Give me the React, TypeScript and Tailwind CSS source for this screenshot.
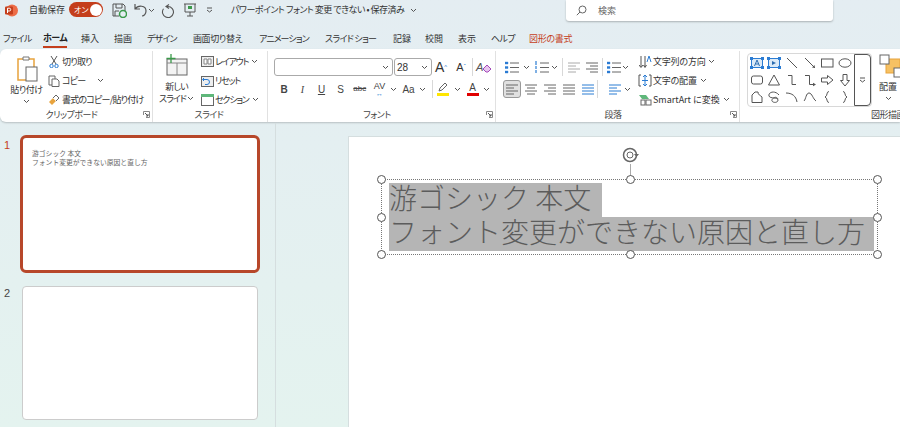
import type { ReactNode } from "react";

const tabs = [
  { label: "ファイル", cls: "w-[40px] ml-[3px] tracking-[-0.6px]" },
  { label: "ホーム", cls: "" },
  { label: "挿入", cls: "w-[33px]" },
  { label: "描画", cls: "w-[33px]" },
  { label: "デザイン", cls: "w-[46px] tracking-[-0.8px]" },
  { label: "画面切り替え", cls: "w-[66px] tracking-[-0.4px]" },
  { label: "アニメーション", cls: "w-[66px] tracking-[-0.9px]" },
  { label: "スライド ショー", cls: "w-[68px] tracking-[-0.7px]" },
  { label: "記録", cls: "w-[32px]" },
  { label: "校閲", cls: "w-[33px]" },
  { label: "表示", cls: "w-[33px]" },
  { label: "ヘルプ", cls: "w-[38px] tracking-[-0.6px]" },
  { label: "図形の書式", cls: "w-[60px] text-[#c43e1c] tracking-[-0.3px]" },
];

function Chev({ className = "" }: { className?: string }) {
  return (
    <svg width="7" height="5" viewBox="0 0 7 5" className={"shrink-0 " + className}>
      <path d="M1 1l2.500 2.500L6 1" fill="none" stroke="#555" strokeWidth="1" />
    </svg>
  );
}

function Launcher() {
  return (
    <svg width="7" height="7" viewBox="0 0 7 7" className="shrink-0">
      <path d="M.5 4V.5H6.500V6.500H3" fill="none" stroke="#888" />
      <path d="M2 2l3 3M5 3v2H3" fill="none" stroke="#555" />
    </svg>
  );
}

function Group({ w, label, children, launcher = true, sep = true }: { w: string; label: string; children: ReactNode; launcher?: boolean; sep?: boolean }) {
  return (
    <div className={"flex flex-col shrink-0 h-full " + w + (sep ? " border-r border-[#e1e1e1]" : "")}>
      <div className="flex-1 flex min-h-0 pt-px">{children}</div>
      <div className="h-[15px] flex items-center pr-[2px] shrink-0">
        <span className="flex-1 text-center text-[9px] tracking-[-0.5px] text-[#444] leading-[15px]">{label}</span>
        {launcher && <Launcher />}
      </div>
    </div>
  );
}

function Row({ icon, text, chev, track = "tracking-[-0.8px]" }: { icon: ReactNode; text: string; chev?: boolean; track?: string }) {
  return (
    <div className="h-[19px] shrink-0 flex items-center gap-[1px] text-[9px] text-[#333] whitespace-nowrap">
      <span className="w-[14px] h-[14px] flex items-center justify-center shrink-0">{icon}</span>
      <span className={track}>{text}</span>
      {chev && <Chev className="ml-[2px]" />}
    </div>
  );
}

function Sep() {
  return <span className="w-px h-[18px] bg-[#d8d8d8] shrink-0" />;
}

function Lines({ kind = "left", color = "#666" }: { kind?: "left" | "center" | "right" | "full"; color?: string }) {
  const d = {
    left: "M1 2h12M1 5h8M1 8h12M1 11h8",
    center: "M1 2h12M3 5h8M1 8h12M3 11h8",
    right: "M1 2h12M5 5h8M1 8h12M5 11h8",
    full: "M1 2h12M1 5h12M1 8h12M1 11h12",
  }[kind];
  return (
    <svg width="14" height="13" viewBox="0 0 14 13" className="shrink-0">
      <path d={d} stroke={color} strokeWidth="1" fill="none" />
    </svg>
  );
}

function ListIcon({ numbered = false }: { numbered?: boolean }) {
  return (
    <svg width="14" height="13" viewBox="0 0 14 13" className="shrink-0">
      <path d="M5 2h9M5 6.500h9M5 11h9" stroke="#666" />
      <path d={numbered ? "M1 0v4M1 5v3M1 9v3" : "M0 1h3v2H0zM0 5.500h3v2H0zM0 10h3v2H0z"} stroke="#2b7cd3" fill="#2b7cd3" strokeWidth={numbered ? 1.2 : 0.4} />
    </svg>
  );
}

function Shapes() {
  const s = { fill: "none", stroke: "#555", strokeWidth: 1 };
  const box = (c: ReactNode) => (
    <svg width="14" height="14" viewBox="0 0 14 14">{c}</svg>
  );
  const txt = (mark: ReactNode) =>
    box(
      <>
        <rect x="1.500" y="2.500" width="11" height="9" fill="#dbeaf7" stroke="#2b7cd3" />
        {mark}
        <path d="M0 1h3v3H0zM11 1h3v3h-3zM0 10h3v3H0zM11 10h3v3h-3z" fill="#2b7cd3" />
      </>
    );
  return [
    txt(<path d="M4.500 10L7 4l2.500 6M5.500 8h3" fill="none" stroke="#2b6cb0" />),
    txt(<path d="M5 5l4 2-4 2z" fill="#2b6cb0" />),
    box(<path d="M2 2l10 10" {...s} />),
    box(<><path d="M2 2l10 10" {...s} /><path d="M12 12l-3-.5 2.500-2.500z" fill="#555" /></>),
    box(<rect x="1.500" y="3" width="11.500" height="8" {...s} />),
    box(<ellipse cx="7" cy="7" rx="6" ry="4.200" {...s} />),
    box(<rect x="1.500" y="3" width="11" height="8" rx="2" {...s} />),
    box(<path d="M7 2l5.500 10h-11z" {...s} />),
    box(<path d="M3 2.500h4v9h4" {...s} />),
    box(<><path d="M2 2.500h4.500v9H11" {...s} /><path d="M13 11.500l-3-1.800v3.600z" fill="#555" /></>),
    box(<path d="M1.500 5h6V2.500L13 7l-5.500 4.500V9h-6z" {...s} />),
    box(<path d="M5 1.500h4v6h2.500L7 13 2.500 7.500H5z" {...s} />),
    box(<path d="M2 12.500V5l3-3h3c0 3 2 3 4 5v5.500z" {...s} />),
    box(<path d="M12 5C8 0 1 2 2 6c1 3 9 1 9 4s-5 3-6 1 4-6 6-2" {...s} />),
    box(<path d="M1 3c6 0 10 3 11 9" {...s} />),
    box(<path d="M1 11c2-2 2-8 5-8s4 6 7 8" {...s} />),
    box(<path d="M9 1.500C6 1.500 8 6 5 7c3 1 1 5.500 4 5.500" {...s} />),
    box(<path d="M5 1.500C8 1.500 6 6 9 7c-3 1-1 5.500-4 5.500" {...s} />),
  ];
}

function Handle({ className }: { className: string }) {
  return <span className={"absolute w-[9px] h-[9px] rounded-full bg-white border border-[#555] " + className} />;
}

export default function App() {
  return (
    <div className="w-[900px] h-[427px] overflow-hidden flex flex-col bg-linear-to-b from-[#e4edf2] to-[#e4f3ef] font-['Noto_Sans_CJK_JP',sans-serif] [font-feature-settings:'palt'] text-[#333]">
      {/* タイトルバー */}
      <div className="h-[22px] mb-[7px] flex items-start shrink-0 text-[9px] whitespace-nowrap">
        <div className="w-[29px] h-[20px] flex items-center pl-[5px] shrink-0">
          <svg width="13" height="13" viewBox="0 0 13 13">
            <circle cx="7" cy="6.500" r="6" fill="#ed6c47" />
            <rect x="0" y="2.500" width="8" height="8" rx="1" fill="#c43e1c" />
            <path d="M2.500 9V4.200h1.800a1.300 1.300 0 010 2.800H2.500" fill="none" stroke="#fff" />
          </svg>
        </div>
        <span className="w-[40px] h-[20px] flex items-center shrink-0">自動保存</span>
        <div className="w-[34px] h-[15px] mt-[2px] rounded-full bg-[#c43e1c] flex items-center justify-between pl-[5px] pr-[1px] text-white text-[8px] shrink-0">
          <span className="leading-none">オン</span>
          <span className="w-[12px] h-[12px] rounded-full bg-white" />
        </div>
        <div className="h-[20px] flex items-center shrink-0 ml-[9px]">
          <svg width="15" height="15" viewBox="0 0 15 15">
            <path d="M1 1h10l2 2v5M7 13H1V1M4 1v4h6V1M3 13V8h4" fill="none" stroke="#555" />
            <circle cx="11" cy="11" r="3.500" fill="none" stroke="#3a9a4a" strokeWidth="1.500" />
          </svg>
        </div>
        <div className="h-[20px] flex items-center shrink-0 ml-[6px]">
          <svg width="15" height="14" viewBox="0 0 15 14">
            <path d="M2 1v5h5M2 6c3-4 11-4 11 2 0 3-2 5-4 5" fill="none" stroke="#555" strokeWidth="1.200" />
          </svg>
          <Chev />
        </div>
        <div className="h-[20px] flex items-center shrink-0 ml-[6px]">
          <svg width="14" height="15" viewBox="0 0 14 15">
            <path d="M8 1.500L5 3.500l3 2M5 3.500h2a5.500 5.500 0 11-4.500 2.300" fill="none" stroke="#555" strokeWidth="1.100" />
          </svg>
        </div>
        <div className="h-[20px] flex items-center shrink-0 ml-[8px]">
          <svg width="14" height="14" viewBox="0 0 14 14">
            <path d="M1 1h12M2 1v8h10V1M7 9v4M4 13h6" fill="none" stroke="#555" />
            <rect x="5" y="3" width="4" height="3" fill="#3a9a4a" />
          </svg>
        </div>
        <div className="h-[20px] flex items-center shrink-0 ml-[9px]">
          <svg width="7" height="6" viewBox="0 0 7 6">
            <path d="M1 1h5M1 3l2.500 2L6 3" fill="none" stroke="#555" />
          </svg>
        </div>
        <span className="h-[20px] flex items-center shrink-0 w-[179px] ml-[18px] tracking-[-0.5px]">パワーポイント フォント 変更 できない • 保存済み</span>
        <div className="h-[20px] flex items-center shrink-0 w-[156px]">
          <Chev />
        </div>
        <div className="w-[267px] h-[21px] bg-white rounded-b-[3px] shadow-[0_1px_2px_rgba(0,0,0,0.25)] flex items-center pl-[10px] gap-[11px] shrink-0 text-[#666]">
          <svg width="11" height="11" viewBox="0 0 11 11">
            <circle cx="6.500" cy="4.500" r="3.500" fill="none" stroke="#666" />
            <path d="M4 7L.8 10.200" stroke="#666" />
          </svg>
          <span>検索</span>
        </div>
      </div>

      {/* タブ */}
      <div className="h-[20px] flex items-center shrink-0 text-[9px] whitespace-nowrap">
        {tabs.map((t) =>
          t.label === "ホーム" ? (
            <div key={t.label} className="w-[38px] h-[20px] flex justify-start">
              <span className="h-[19px] flex items-center font-bold text-[#222] border-b-2 border-[#c43e1c] tracking-[-0.5px]">{t.label}</span>
            </div>
          ) : (
            <span key={t.label} className={t.cls}>{t.label}</span>
          )
        )}
      </div>

      {/* リボン */}
      <div className="h-[73px] bg-white rounded-tl-[6px] rounded-bl-[6px] shadow-[0_1px_2px_rgba(0,0,0,0.2)] flex shrink-0 pt-[2px] text-[9px]">
        <Group w="w-[153px]" label="クリップボード">
          <div className="w-[47px] flex flex-col items-center pl-[6px]">
            <svg width="24" height="30" viewBox="0 0 24 30" className="mt-[2px] shrink-0">
              <path d="M3 5h16v21H3z" fill="#fff" stroke="#e8a33d" strokeWidth="1.500" />
              <path d="M8 3h6v3H8z" fill="#fff" stroke="#777" />
              <rect x="11" y="13" width="11" height="14" fill="#fff" stroke="#666" />
            </svg>
            <span className="leading-[12px] whitespace-nowrap tracking-[-0.5px]">貼り付け</span>
            <Chev className="mt-[3px]" />
          </div>
          <div className="flex flex-col">
            <Row
              text="切り取り"
              icon={
                <svg width="10" height="12" viewBox="0 0 10 12">
                  <path d="M2 0l5 8M8 0L3 8" stroke="#555" fill="none" />
                  <circle cx="2.500" cy="10" r="1.700" fill="none" stroke="#2b7cd3" />
                  <circle cx="7.500" cy="10" r="1.700" fill="none" stroke="#2b7cd3" />
                </svg>
              }
            />
            <div className="flex items-center shrink-0">
              <Row
                text="コピー"
                icon={
                  <svg width="12" height="12" viewBox="0 0 12 12">
                    <path d="M1 1h6v9H1z" fill="none" stroke="#666" />
                    <path d="M4 4h5l2 2v5.500H4z" fill="#fff" stroke="#666" />
                  </svg>
                }
              />
              <Chev className="ml-[12px]" />
            </div>
            <Row
              text="書式のコピー/貼り付け"
              icon={
                <svg width="12" height="12" viewBox="0 0 12 12">
                  <path d="M1 8l4-4 3 3-4 4z" fill="#e8a33d" />
                  <path d="M5 4l3-3 3 3-3 3" fill="#fff" stroke="#666" />
                </svg>
              }
            />
          </div>
        </Group>

        <Group w="w-[115px]" label="スライド" launcher={false}>
          <div className="w-[47px] flex flex-col items-center">
            <svg width="23" height="22" viewBox="0 0 23 22" className="mt-[2px] shrink-0">
              <rect x="2" y="5" width="20" height="16" fill="#f3f3f3" stroke="#666" />
              <path d="M2 9h20M12 9v12" stroke="#888" />
              <path d="M6 0v9M1.500 4.500h9" stroke="#3a9a4a" strokeWidth="1.300" />
            </svg>
            <span className="mt-[5px] leading-[11px] text-center whitespace-nowrap tracking-[-0.8px]">新しい</span>
            <span className="leading-[11px] flex items-center gap-[1px] mt-[1px] whitespace-nowrap tracking-[-1px]">スライド<Chev /></span>
          </div>
          <div className="flex flex-col">
            <Row
              text="レイアウト"
              chev
              track="tracking-[-1.2px]"
              icon={
                <svg width="13" height="11" viewBox="0 0 13 11">
                  <rect x=".5" y=".5" width="12" height="10" fill="#eee" stroke="#666" />
                  <path d="M3 3h3v5H3zM7 3h3v5H7z" fill="#fff" stroke="#888" />
                </svg>
              }
            />
            <Row
              text="リセット"
              track="tracking-[-1.2px]"
              icon={
                <svg width="13" height="12" viewBox="0 0 13 12">
                  <rect x=".5" y="1.500" width="12" height="10" fill="#eee" stroke="#666" />
                  <path d="M3 3l-1.500 1.500L3 6M2 4.500h4a2.500 2.500 0 010 5H4" fill="none" stroke="#2b7cd3" />
                </svg>
              }
            />
            <Row
              text="セクション"
              chev
              track="tracking-[-1.2px]"
              icon={
                <svg width="13" height="12" viewBox="0 0 13 12">
                  <rect x=".5" y=".5" width="12" height="11" fill="#fff" stroke="#666" />
                  <rect x="0" y="0" width="13" height="3" fill="#5fb77a" />
                </svg>
              }
            />
          </div>
        </Group>

        <Group w="w-[228px]" label="フォント">
          <div className="flex flex-col pl-[6px] pt-[6px] w-full">
            <div className="h-[18px] flex items-center shrink-0">
              <div className="w-[119px] h-[18px] rounded-[3px] border border-[#aaa] flex items-center justify-end pr-[3px]">
                <Chev />
              </div>
              <div className="w-[38px] h-[18px] ml-[1px] rounded-[3px] border border-[#aaa] flex items-center justify-between pl-[2px] pr-[3px] font-['Liberation_Sans',sans-serif] text-[10px]">
                28
                <Chev />
              </div>
              <span className="w-[18px] text-center text-[14px] font-['Liberation_Sans',sans-serif] leading-none">A<sup className="text-[6px] text-[#2b7cd3]">^</sup></span>
              <span className="w-[22px] text-center text-[11px] font-['Liberation_Sans',sans-serif] leading-none">A<sup className="text-[6px] text-[#2b7cd3]">ˇ</sup></span>
              <Sep />
              <span className="ml-[3px] text-[11px] font-['Liberation_Sans',sans-serif] text-[#555] italic leading-none">A</span>
              <svg width="8" height="8" viewBox="0 0 8 8" className="mt-[4px] shrink-0">
                <path d="M0 4l4-4 4 4-3 3H3z" fill="#e8c6ef" stroke="#a349b8" />
              </svg>
            </div>
            <div className="h-[20px] mt-[3px] flex items-center shrink-0 font-['Liberation_Sans',sans-serif] text-[#444] text-[10px]">
              <span className="w-[18px] text-center font-bold ml-[1px]">B</span>
              <span className="w-[19px] text-center italic font-['Liberation_Serif',serif]">I</span>
              <span className="w-[19px] text-center underline">U</span>
              <span className="w-[19px] text-center">S</span>
              <span className="w-[19.500px] text-center text-[8px] line-through">abc</span>
              <span className="w-[20px] text-center text-[9px] flex flex-col items-center leading-[9px]">
                AV
                <span className="text-[7px] leading-[5px] text-[#2b7cd3]">↔</span>
              </span>
              <Chev />
              <span className="w-[16px] text-center text-[10px] ml-[4px]">Aa</span>
              <Chev className="ml-[2px]" />
              <span className="w-px h-[18px] bg-[#d8d8d8] ml-[6px] mr-[4px]" />
              <div className="w-[12px] h-[15px] flex flex-col items-center shrink-0">
                <svg width="12" height="10" viewBox="0 0 12 10">
                  <path d="M2 9l1-3 5-5 2 2-5 5z" fill="none" stroke="#666" />
                </svg>
                <span className="w-[12px] h-[3px] mt-[1px] bg-[#ffe600]" />
              </div>
              <Chev className="ml-[5px]" />
              <div className="w-[14px] h-[15px] flex flex-col items-center ml-[5px] mr-[3px] shrink-0">
                <span className="text-[10px] leading-[11px]">A</span>
                <span className="w-[12px] h-[3px] bg-[#e00000]" />
              </div>
              <Chev />
            </div>
          </div>
        </Group>

        <Group w="w-[244px]" label="段落">
          <div className="flex flex-col pl-[7px] pt-[6px] w-[140px] shrink-0">
            <div className="h-[18px] flex items-center shrink-0 pl-[2px]">
              <ListIcon />
              <Chev className="ml-[4px]" />
              <span className="w-[5px]" />
              <ListIcon numbered />
              <Chev className="ml-[2px]" />
              <span className="w-[4px]" />
              <Sep />
              <span className="w-[4px]" />
              <Lines color="#aaa" />
              <span className="w-[4px]" />
              <Lines kind="right" />
              <span className="w-[3px]" />
              <Sep />
              <span className="w-[4px]" />
              <ListIcon />
              <Chev className="ml-[1px]" />
            </div>
            <div className="h-[20px] mt-[3px] flex items-center shrink-0">
              <span className="w-[18px] h-[18px] rounded-[3px] bg-[#e0e0e0] border border-[#999] flex items-center justify-center shrink-0">
                <Lines />
              </span>
              <span className="w-[19px] flex justify-center"><Lines kind="center" /></span>
              <span className="w-[19px] flex justify-center"><Lines kind="right" /></span>
              <span className="w-[19px] flex justify-center"><Lines kind="full" /></span>
              <span className="w-[19px] flex justify-center"><Lines kind="full" color="#2b7cd3" /></span>
              <Sep />
              <span className="w-[10px]" />
              <Lines color="#2b7cd3" />
              <Chev className="ml-[2px]" />
            </div>
          </div>
          <div className="flex flex-col pl-[2px]">
            <Row
              text="文字列の方向"
              chev
              track="tracking-[-0.2px]"
              icon={
                <svg width="13" height="14" viewBox="0 0 13 14">
                  <path d="M2 1v11M0 10l2 2.500L4 10M6 1v11M4.500 10L6 12.500 7.500 10" fill="none" stroke="#555" />
                  <path d="M8 7l2-6 2 6" fill="none" stroke="#2b7cd3" />
                </svg>
              }
            />
            <Row
              text="文字の配置"
              chev
              track="tracking-[-0.2px]"
              icon={
                <svg width="14" height="13" viewBox="0 0 14 13">
                  <path d="M3 1H1v11h2M11 1h2v11h-2" fill="none" stroke="#555" />
                  <path d="M7 1v11M5 3l2-2 2 2M5 10l2 2 2-2M4 6.500h6" fill="none" stroke="#2b7cd3" />
                </svg>
              }
            />
            <Row
              text="SmartArt に変換"
              chev
              track="tracking-[0px]"
              icon={
                <svg width="14" height="12" viewBox="0 0 14 12">
                  <path d="M1 1h7l3 4H4z" fill="#5fb77a" />
                  <rect x="8" y="6" width="5" height="5" fill="#fff" stroke="#666" />
                  <rect x="3" y="6" width="4" height="5" fill="#fff" stroke="#666" />
                </svg>
              }
            />
          </div>
        </Group>

        <Group w="w-[298px]" label="図形描画" launcher={false} sep={false}>
          <div className="flex pl-[7px] pt-[1px] items-start">
            <div className="w-[125px] h-[54px] rounded-[4px] border border-[#d8d8d8] flex shrink-0">
              <div className="w-[106px] grid grid-cols-6 grid-rows-3 place-items-center">
                {Shapes().map((icon, i) => (
                  <span key={i} className="w-[17px] h-[18px] flex items-center justify-center">{icon}</span>
                ))}
              </div>
              <div className="flex-1 border border-[#555] rounded-r-[4px] flex items-center justify-center">
                <svg width="7" height="6" viewBox="0 0 7 6">
                  <path d="M1 1h5M1 3l2.500 2L6 3" fill="none" stroke="#555" />
                </svg>
              </div>
            </div>
            <div className="w-[30px] flex flex-col items-start pl-[7px] shrink-0">
              <svg width="24" height="24" viewBox="0 0 24 24" className="mt-[1px] shrink-0">
                <rect x="7" y="5" width="14" height="14" fill="#f6c163" stroke="#e8a33d" />
                <rect x="1" y="1" width="9" height="9" fill="#fff" stroke="#666" />
                <rect x="15" y="14" width="9" height="9" fill="#fff" stroke="#666" />
              </svg>
              <span className="mt-[3px] leading-[12px] whitespace-nowrap">配置</span>
              <Chev className="mt-[3px] ml-[6px]" />
            </div>
          </div>
        </Group>
      </div>

      {/* メイン */}
      <div className="flex-1 flex min-h-0 pt-[1px] [font-feature-settings:normal]">
        <div className="w-[276px] shrink-0 border-r border-[#d5dedf] flex flex-col pt-[12px] pl-[4px]">
          <div className="flex items-start">
            <span className="w-[16px] text-[11px] leading-[14px] mt-[3px] text-[#c43e1c] font-['Liberation_Sans',sans-serif]">1</span>
            <div className="w-[240px] h-[138px] rounded-[6px] border-[3px] border-[#b7472a] bg-white pl-[9px] pt-[11px] text-[6.800px] leading-[9px] text-[#666] whitespace-nowrap">
              <div>游ゴシック 本文</div>
              <div>フォント変更ができない原因と直し方</div>
            </div>
          </div>
          <div className="flex items-start mt-[13px]">
            <span className="w-[18px] text-[11px] leading-[14px] text-[#444] font-['Liberation_Sans',sans-serif]">2</span>
            <div className="w-[236px] h-[134px] rounded-[4px] border border-[#ccc] bg-white" />
          </div>
        </div>
        <div className="flex-1 pl-[72px] pt-[13px] min-w-0">
          <div className="w-full h-full bg-white border-t border-l border-[#d5dedf] pl-[32px] pt-[42px]">
            <div className="relative w-[497px] h-[76px] border border-dotted border-[#777] px-[7px] pt-[3px] text-[28px] leading-[28px] font-light text-[#5c5c5c] whitespace-nowrap">
              <span className="absolute left-[248px] top-[-26px] w-px h-[26px] bg-[#aaa]" />
              <svg width="18" height="18" viewBox="0 0 18 18" className="absolute left-[240px] top-[-34px] bg-white">
                <circle cx="8" cy="9" r="6.500" fill="none" stroke="#666" strokeWidth="1.500" />
                <circle cx="8" cy="9" r="3" fill="none" stroke="#666" />
                <path d="M12 8l5 0-2.500 3z" fill="#666" />
              </svg>
              <Handle className="left-[-5px] top-[-5px]" />
              <Handle className="left-[244px] top-[-5px]" />
              <Handle className="right-[-5px] top-[-5px]" />
              <Handle className="left-[-5px] top-[33px]" />
              <Handle className="right-[-5px] top-[33px]" />
              <Handle className="left-[-5px] bottom-[-5px]" />
              <Handle className="left-[244px] bottom-[-5px]" />
              <Handle className="right-[-5px] bottom-[-5px]" />
              <div className="w-[213px] h-[34px] bg-[#b5b5b5]">游ゴシック 本文</div>
              <div className="w-[485px] h-[34px] bg-[#b5b5b5]">フォント変更ができない原因と直し方</div>
            </div>
          </div>
        </div>
      </div>
    </div>
  );
}
